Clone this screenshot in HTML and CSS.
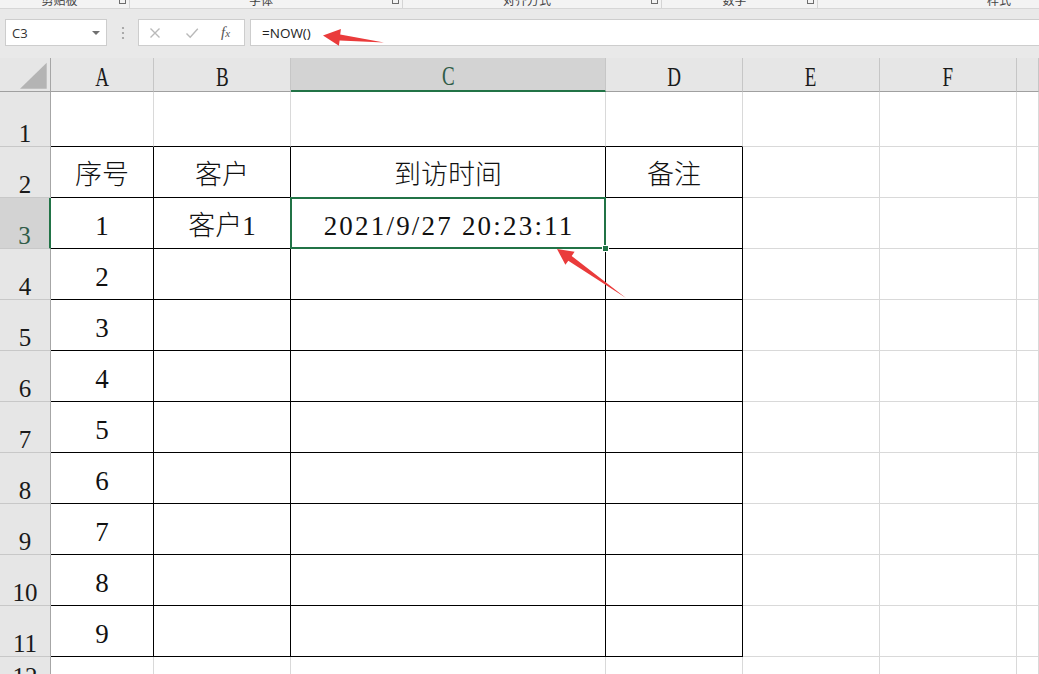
FILE: index.html
```html
<!DOCTYPE html>
<html lang="zh-CN">
<head>
<meta charset="utf-8">
<title>Excel NOW()</title>
<link rel="stylesheet" href="styles.css">
</head>
<body>
<div class="app">
  <div class="ribbon">
    <div class="grp g1"><span class="lbl">剪贴板</span><span class="launch"></span></div>
    <div class="grp g2"><span class="lbl">字体</span><span class="launch"></span></div>
    <div class="grp g3"><span class="lbl">对齐方式</span><span class="launch"></span></div>
    <div class="grp g4"><span class="lbl">数字</span><span class="launch"></span></div>
    <div class="grp g5"><span class="lbl">样式</span></div>
  </div>

  <div class="fbar">
    <div class="namebox"><span>C3</span><span class="dd"></span></div>
    <div class="dots">
      <svg width="4" height="14" viewBox="0 0 4 14"><circle cx="2" cy="2" r="1.1" fill="#9a9a9a"/><circle cx="2" cy="7" r="1.1" fill="#9a9a9a"/><circle cx="2" cy="12" r="1.1" fill="#9a9a9a"/></svg>
    </div>
    <div class="fbtns">
      <svg class="ico x" width="14" height="14" viewBox="0 0 14 14"><path d="M2.5 2.5 L11.5 11.5 M11.5 2.5 L2.5 11.5" stroke="#b9b9b9" stroke-width="1.4" fill="none"/></svg>
      <svg class="ico ok" width="14" height="14" viewBox="0 0 14 14"><path d="M1.5 7.5 L5.2 11.2 L12.8 2.8" stroke="#b9b9b9" stroke-width="1.4" fill="none"/></svg>
      <span class="fx">f<span class="fxs">x</span></span>
    </div>
    <div class="finput">=NOW()</div>
  </div>

  <div class="sheet">
    <div class="corner"><svg width="50" height="33" viewBox="0 0 50 33"><polygon points="46.7,4.7 46.7,30.7 20,30.7" fill="#b4b4b4"/></svg></div>
    <div class="ch"><span class="cl">A</span></div>
    <div class="ch"><span class="cl">B</span></div>
    <div class="ch sel"><span class="cl">C</span></div>
    <div class="ch"><span class="cl">D</span></div>
    <div class="ch"><span class="cl">E</span></div>
    <div class="ch"><span class="cl">F</span></div>
    <div class="ch"></div>

    <div class="rh">1</div>
    <div class="c tb"></div><div class="c tb"></div><div class="c tb"></div><div class="c tb"></div>
    <div class="c"></div><div class="c"></div><div class="c"></div>

    <div class="rh">2</div>
    <div class="c t">序号</div><div class="c t">客户</div><div class="c t">到访时间</div><div class="c t">备注</div>
    <div class="c"></div><div class="c"></div><div class="c"></div>

    <div class="rh sel">3</div>
    <div class="c t">1</div><div class="c t">客户1</div><div class="c t active"><span class="time">2021/9/27 20:23:11</span></div><div class="c t"></div>
    <div class="c"></div><div class="c"></div><div class="c"></div>

    <div class="rh">4</div>
    <div class="c t">2</div><div class="c t"></div><div class="c t"></div><div class="c t"></div>
    <div class="c"></div><div class="c"></div><div class="c"></div>

    <div class="rh">5</div>
    <div class="c t">3</div><div class="c t"></div><div class="c t"></div><div class="c t"></div>
    <div class="c"></div><div class="c"></div><div class="c"></div>

    <div class="rh">6</div>
    <div class="c t">4</div><div class="c t"></div><div class="c t"></div><div class="c t"></div>
    <div class="c"></div><div class="c"></div><div class="c"></div>

    <div class="rh">7</div>
    <div class="c t">5</div><div class="c t"></div><div class="c t"></div><div class="c t"></div>
    <div class="c"></div><div class="c"></div><div class="c"></div>

    <div class="rh">8</div>
    <div class="c t">6</div><div class="c t"></div><div class="c t"></div><div class="c t"></div>
    <div class="c"></div><div class="c"></div><div class="c"></div>

    <div class="rh">9</div>
    <div class="c t">7</div><div class="c t"></div><div class="c t"></div><div class="c t"></div>
    <div class="c"></div><div class="c"></div><div class="c"></div>

    <div class="rh">10</div>
    <div class="c t">8</div><div class="c t"></div><div class="c t"></div><div class="c t"></div>
    <div class="c"></div><div class="c"></div><div class="c"></div>

    <div class="rh">11</div>
    <div class="c t">9</div><div class="c t"></div><div class="c t"></div><div class="c t"></div>
    <div class="c"></div><div class="c"></div><div class="c"></div>

    <div class="rh">12</div>
    <div class="c"></div><div class="c"></div><div class="c"></div><div class="c"></div>
    <div class="c"></div><div class="c"></div><div class="c"></div>
  </div>

  <svg class="annot" width="1039" height="674" viewBox="0 0 1039 674">
    <polygon points="323,35.5 340.9,29 340.2,34.4 384,42.5 339.6,40.4 338.9,45.8" fill="#ea3b3b"/>
    <polygon points="557,249 574.6,251.8 571.7,255.9 626,298 568.3,260.7 565.4,264.8" fill="#ea3b3b"/>
  </svg>
</div>
</body>
</html>
```

FILE: styles.css
```css
html, body {
  margin: 0;
  padding: 0;
  background: #ffffff;
}
body {
  width: 1039px;
  height: 674px;
  overflow: hidden;
}
.app {
  position: relative;
  width: 1039px;
  height: 674px;
  overflow: hidden;
  font-family: "Open Sans", "Noto Sans", "Noto Sans CJK SC", sans-serif;
}

/* ribbon remnant */
.ribbon {
  display: flex;
  height: 8px;
  background: #f3f3f3;
  border-bottom: 1px solid #d6d6d6;
  overflow: hidden;
}
.grp {
  flex: none;
  display: flex;
  align-items: flex-start;
  border-right: 1px solid #d4d4d4;
  box-sizing: border-box;
}
.g1 { width: 130px; }
.g2 { width: 273px; }
.g3 { width: 259px; }
.g4 { width: 156px; }
.g5 { width: 362px; border-right: none; }
.lbl {
  flex: 1;
  text-align: center;
  font-family: "Noto Sans CJK SC", sans-serif;
  font-size: 12px;
  line-height: 12px;
  margin-top: -6px;
  color: #444;
}
.launch {
  width: 7px;
  height: 7px;
  border: 1px solid #6d6d6d;
  margin-top: -3px;
  margin-right: 3px;
  box-sizing: border-box;
}

/* formula bar */
.fbar {
  display: flex;
  align-items: flex-start;
  height: 49px;
  box-sizing: border-box;
  padding-top: 10px;
  background: #e9e9e9;
}
.namebox {
  margin-left: 5px;
  width: 102px;
  height: 27px;
  box-sizing: border-box;
  background: #fff;
  border: 1px solid #cdcdcd;
  display: flex;
  align-items: center;
  padding-left: 6px;
  font-size: 13px;
  color: #333;
}
.dd {
  margin-left: auto;
  margin-right: 6px;
  width: 0;
  height: 0;
  border-top: 4px solid #707070;
  border-left: 4px solid transparent;
  border-right: 4px solid transparent;
}
.dots {
  width: 31px;
  height: 27px;
  display: flex;
  align-items: center;
  justify-content: center;
}
.fbtns {
  width: 107px;
  height: 27px;
  box-sizing: border-box;
  background: #fff;
  border: 1px solid #cdcdcd;
  display: flex;
  align-items: center;
  padding-left: 9px;
}
.ico { flex: none; }
.ico.ok { margin-left: 23px; }
.fx {
  margin-left: 22px;
  font-family: "Liberation Serif", serif;
  font-style: italic;
  font-size: 15px;
  color: #555;
  line-height: 1;
}
.fxs {
  font-size: 11px;
}
.finput {
  margin-left: 5px;
  flex: 1;
  height: 27px;
  box-sizing: border-box;
  background: #fff;
  border: 1px solid #cdcdcd;
  border-right: none;
  padding-left: 11px;
  display: flex;
  align-items: center;
  font-size: 13.5px;
  color: #222;
}

/* sheet */
.sheet {
  display: grid;
  grid-template-columns: 51px 103px 137px 315px 137px 137px 137px 1fr;
  grid-template-rows: 34px 55px repeat(10, 51px) 33px;
}
.sheet > div {
  box-sizing: border-box;
}
.corner {
  background: #e6e6e6;
  border-right: 1px solid #a6a6a6;
  border-bottom: 1px solid #a0a0a0;
}
.corner svg { display: block; }
.ch {
  background: #e6e6e6;
  border-right: 1px solid #c6c6c6;
  border-bottom: 1px solid #a0a0a0;
  display: flex;
  align-items: flex-end;
  justify-content: center;
  font-family: "Liberation Serif", serif;
  font-size: 28px;
  line-height: 28px;
  color: #1a1a1a;
}
.ch.sel {
  background: #d3d3d3;
  border-bottom: 2px solid #217346;
  color: #2f5c47;
}
.cl {
  display: inline-block;
  transform: scaleX(0.68);
}
.rh {
  background: #e6e6e6;
  border-right: 1px solid #a6a6a6;
  border-bottom: 1px solid #c8c8c8;
  display: flex;
  align-items: flex-end;
  justify-content: center;
  font-family: "Liberation Serif", serif;
  font-size: 25px;
  line-height: 25px;
  color: #1a1a1a;
}
.rh.sel {
  background: #d3d3d3;
  border-right: 2px solid #217346;
  color: #2f5c47;
}
.c {
  background: #fff;
  border-right: 1px solid #d9d9d9;
  border-bottom: 1px solid #d9d9d9;
  display: flex;
  align-items: flex-end;
  justify-content: center;
  padding-bottom: 6px;
  font-family: "Liberation Serif", "Noto Sans CJK SC", serif;
  font-weight: 300;
  font-size: 27px;
  line-height: 31px;
  color: #111;
  white-space: nowrap;
}
.c.tb {
  border-bottom-color: #000;
}
.c.t {
  border-right-color: #000;
  border-bottom-color: #000;
}
.time {
  letter-spacing: 2.2px;
  margin-right: -2.2px;
}
.c.active {
  position: relative;
}
.c.active::before {
  content: "";
  position: absolute;
  top: -1px;
  left: -1px;
  right: -1px;
  bottom: -1px;
  border: 2px solid #217346;
  z-index: 2;
}
.c.active::after {
  content: "";
  position: absolute;
  right: -4px;
  bottom: -4px;
  width: 5px;
  height: 5px;
  background: #217346;
  border: 1px solid #fff;
  z-index: 3;
}

/* annotations */
.annot {
  position: absolute;
  left: 0;
  top: 0;
  pointer-events: none;
  z-index: 10;
}
```
